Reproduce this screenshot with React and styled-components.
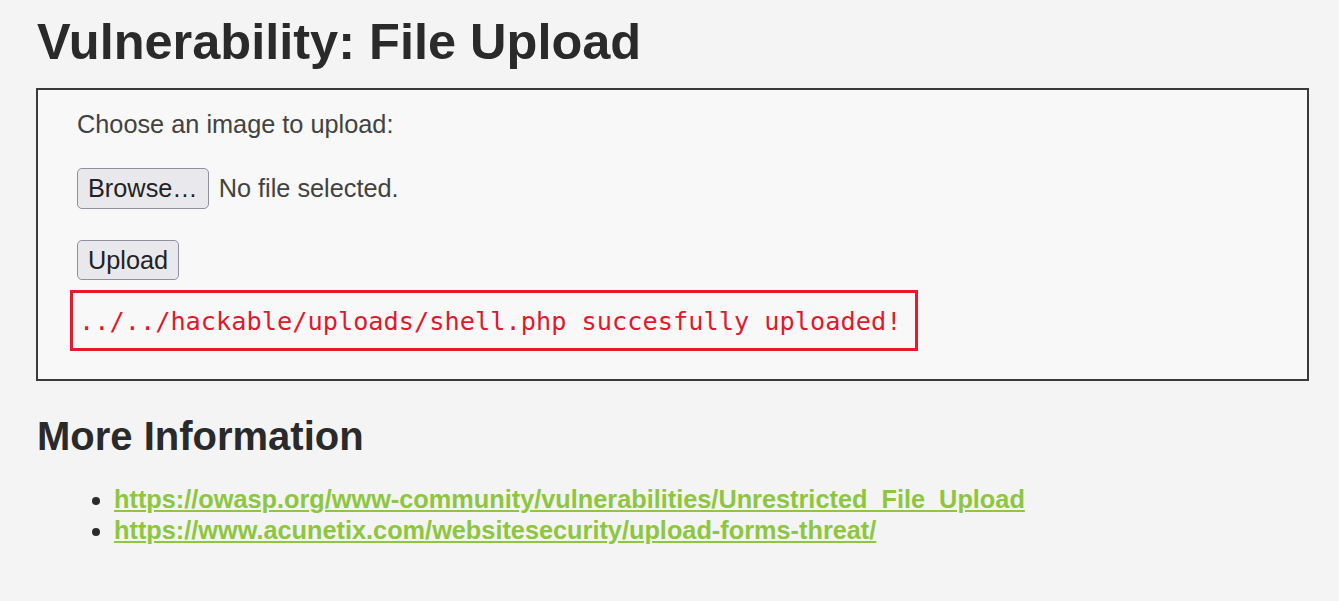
import React from "react";
import styled, { createGlobalStyle } from "styled-components";

const Global = createGlobalStyle`
  html, body { margin: 0; padding: 0; background: #f4f4f4; }
  body { font-family: "Liberation Sans", Arial, sans-serif; color: #2b2b2b; }
`;

const Page = styled.div`
  padding: 12px 30px 40px 36px;
`;

const Title = styled.h1`
  margin: 0 0 16px 1px;
  font-size: 50.5px;
  line-height: 60px;
  font-weight: 700;
  color: #2a2a2a;
`;

const Box = styled.div`
  border: 2px solid #3a3a3a;
  background: #f8f8f8;
  padding: 19px 39px 28px 39px;
`;

const Label = styled.p`
  margin: 0 0 29px 0;
  font-size: 25.3px;
  line-height: 30px;
  color: #424242;
`;

const Row = styled.div`
  display: flex;
  align-items: center;
  gap: 10px;
  margin-bottom: ${(p) => p.$mb || 0}px;
`;

const Btn = styled.button`
  font-family: "Liberation Sans", Arial, sans-serif;
  font-size: 25.3px;
  color: #222;
  background: #e9e9ed;
  border: 1px solid #8f8f9d;
  border-radius: 5px;
  height: ${(p) => p.$h}px;
  padding: 0 10px;
`;

const NoFile = styled.span`
  font-size: 25.3px;
  color: #424242;
`;

const Msg = styled.pre`
  margin: 10px 0 0 -7px;
  width: fit-content;
  border: 3px solid #e8192c;
  padding: 14px 14px 11px 6px;
  font-family: "DejaVu Sans Mono", "Liberation Mono", monospace;
  font-size: 25.3px;
  line-height: 30px;
  color: #e0192f;
`;

const H2 = styled.h2`
  margin: 33px 0 0 1px;
  font-size: 40px;
  line-height: 44px;
  font-weight: 700;
  color: #2a2a2a;
`;

const List = styled.ul`
  margin: 26px 0 0 0;
  padding-left: 78px;
  font-size: 25.3px;
  line-height: 31px;
  li::marker { color: #2b2b2b; }
`;

const Link = styled.a`
  color: #8dc63f;
  font-weight: 700;
  text-decoration: underline;
`;

export default function App() {
  return (
    <>
      <Global />
      <Page>
        <Title>Vulnerability: File Upload</Title>
        <Box>
          <Label>Choose an image to upload:</Label>
          <Row $mb={31}>
            <Btn $h={41}>Browse…</Btn>
            <NoFile>No file selected.</NoFile>
          </Row>
          <Row>
            <Btn $h={40}>Upload</Btn>
          </Row>
          <Msg>../../hackable/uploads/shell.php succesfully uploaded!</Msg>
        </Box>
        <H2>More Information</H2>
        <List>
          <li>
            <Link href="#">https://owasp.org/www-community/vulnerabilities/Unrestricted_File_Upload</Link>
          </li>
          <li>
            <Link href="#">https://www.acunetix.com/websitesecurity/upload-forms-threat/</Link>
          </li>
        </List>
      </Page>
    </>
  );
}
